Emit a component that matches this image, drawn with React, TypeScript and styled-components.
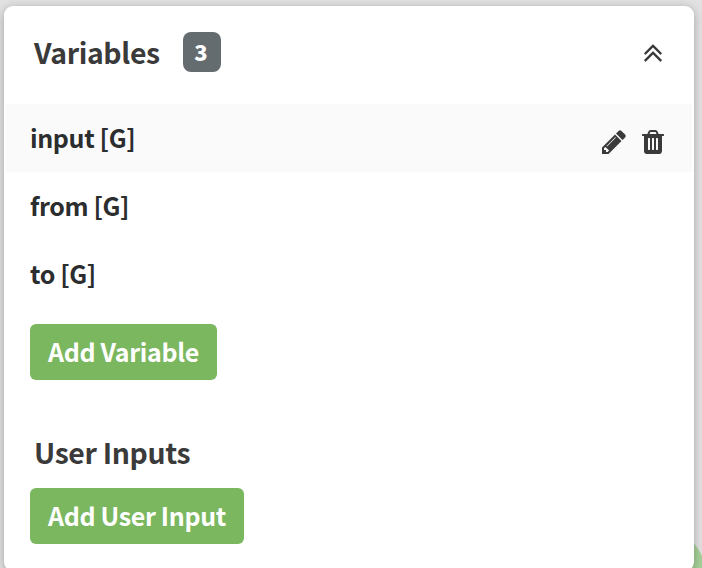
import React from "react";
import styled, { createGlobalStyle } from "styled-components";

const Global = createGlobalStyle`
  * { box-sizing: border-box; }
  body {
    margin: 0;
    overflow: hidden;
    background: #e1e1e1;
    font-family: "Noto Sans CJK SC", "Noto Sans", sans-serif;
    color: #3a3a3a;
  }
`;

const Canvas = styled.main`
  position: relative;
  height: 568px;
  overflow: hidden;
  padding: 6px 8px 0 4px;
`;

const CanvasNode = styled.div`
  position: absolute;
  left: 597px;
  top: 524px;
  width: 110px;
  height: 110px;
  border-radius: 50%;
  background: #a6d098;
`;

const Panel = styled.section`
  position: relative;
  height: 565px;
  padding: 0 2px;
  border-radius: 9px;
  background: #fff;
  box-shadow: 0 2px 10px rgba(0, 0, 0, 0.28);
`;

const Header = styled.header`
  display: flex;
  align-items: center;
  height: 98px;
  padding: 0 23px 6px 28px;
`;

const Title = styled.h2<{ $width: number }>`
  width: ${(p) => p.$width}px;
  margin: 0;
  font-size: 28.4px;
  line-height: 40px;
  font-weight: 700;
  letter-spacing: -0.35px;
  white-space: nowrap;
`;

const Badge = styled.span`
  width: 38px;
  height: 40px;
  margin-left: 23px;
  padding-right: 2px;
  border-radius: 8px;
  background: #646c6f;
  color: #fff;
  font-size: 22px;
  font-weight: 900;
  line-height: 38px;
  text-align: center;
`;

const IconButton = styled.button<{ $size: number }>`
  display: block;
  width: ${(p) => p.$size}px;
  height: ${(p) => p.$size}px;
  padding: 0;
  border: 0;
  background: none;
  color: #3a3a3a;

  svg {
    display: block;
    width: 100%;
    height: 100%;
    fill: currentColor;
  }
`;

const Collapse = styled(IconButton)`
  margin: 5px 0 0 auto;
`;

const List = styled.ul`
  margin: 0;
  padding: 0;
  list-style: none;
`;

const Row = styled.li<{ $active?: boolean }>`
  display: flex;
  align-items: center;
  justify-content: space-between;
  height: 68px;
  padding: 0 25px 0 24px;
  background: ${(p) => (p.$active ? "#fafafa" : "transparent")};
`;

const Name = styled.span`
  padding-bottom: 2px;
  color: #2b2d2e;
  font-size: 25px;
  font-weight: 700;
  letter-spacing: -0.38px;
  line-height: 40px;
  white-space: nowrap;
`;

const Actions = styled.div`
  display: flex;
  gap: 11px;
  padding-top: 8px;
`;

const AddButton = styled.button<{ $width: number }>`
  display: block;
  width: ${(p) => p.$width}px;
  height: 56px;
  margin-left: 24px;
  padding: 0 0 2px;
  border: 0;
  border-radius: 6px;
  background: #7bb75f;
  color: #fff;
  font-family: inherit;
  font-size: 25px;
  font-weight: 700;
  letter-spacing: -0.35px;
  line-height: 54px;
  white-space: nowrap;
`;

const Variables = styled.div`
  padding-bottom: 52px;

  ${AddButton} {
    margin-top: 16px;
  }
`;

const InputsHeading = styled.div`
  display: flex;
  height: 56px;
  padding-left: 28px;
`;

const icons = {
  collapse:
    "M1395 1184q0 13-10 23l-50 50q-10 10-23 10t-23-10l-393-393-393 393q-10 10-23 10t-23-10l-50-50q-10-10-10-23t10-23l466-466q10-10 23-10t23 10l466 466q10 10 10 23zm0-384q0 13-10 23l-50 50q-10 10-23 10t-23-10l-393-393-393 393q-10 10-23 10t-23-10l-50-50q-10-10-10-23t10-23l466-466q10-10 23-10t23 10l466 466q10 10 10 23z",
  pencil:
    "M491 1536l91-91-235-235-91 91v107h128v128h107zm523-928q0-22-22-22-10 0-17 7l-542 542q-7 7-7 17 0 22 22 22 10 0 17-7l542-542q7-7 7-17zm-54-192l416 416-832 832h-416v-416zm683 96q0 53-37 90l-166 166-416-416 166-165q36-38 90-38 53 0 91 38l235 234q37 39 37 91z",
  trash:
    "M704 1376v-704q0-14-9-23t-23-9h-64q-14 0-23 9t-9 23v704q0 14 9 23t23 9h64q14 0 23-9t9-23zm256 0v-704q0-14-9-23t-23-9h-64q-14 0-23 9t-9 23v704q0 14 9 23t23 9h64q14 0 23-9t9-23zm256 0v-704q0-14-9-23t-23-9h-64q-14 0-23 9t-9 23v704q0 14 9 23t23 9h64q14 0 23-9t9-23zm-544-992h448l-48-117q-7-9-17-11h-317q-10 2-17 11zm928 32v64q0 14-9 23t-23 9h-96v948q0 83-47 143.5t-113 60.5h-832q-66 0-113-58.5t-47-141.5v-952h-96q-14 0-23-9t-9-23v-64q0-14 9-23t23-9h309l70-167q15-37 54-63t79-26h320q40 0 79 26t54 63l70 167h309q14 0 23 9t9 23z",
};

const Icon = ({ name }: { name: keyof typeof icons }) => (
  <svg viewBox="0 0 1792 1792" aria-hidden="true">
    <path d={icons[name]} />
  </svg>
);

const variables = ["input [G]", "from [G]", "to [G]"];

export default function App() {
  return (
    <>
      <Global />
      <Canvas>
        <CanvasNode />
        <Panel>
          <Header>
            <Title $width={126}>Variables</Title>
            <Badge>{variables.length}</Badge>
            <Collapse $size={32} aria-label="Collapse">
              <Icon name="collapse" />
            </Collapse>
          </Header>
          <Variables>
            <List>
              {variables.map((name, i) => (
                <Row key={name} $active={i === 0}>
                  <Name>{name}</Name>
                  {i === 0 && (
                    <Actions>
                      <IconButton $size={28} aria-label="Edit">
                        <Icon name="pencil" />
                      </IconButton>
                      <IconButton $size={28} aria-label="Delete">
                        <Icon name="trash" />
                      </IconButton>
                    </Actions>
                  )}
                </Row>
              ))}
            </List>
            <AddButton $width={187}>Add Variable</AddButton>
          </Variables>
          <InputsHeading>
            <Title $width={157}>User Inputs</Title>
          </InputsHeading>
          <AddButton $width={214}>Add User Input</AddButton>
        </Panel>
      </Canvas>
    </>
  );
}
